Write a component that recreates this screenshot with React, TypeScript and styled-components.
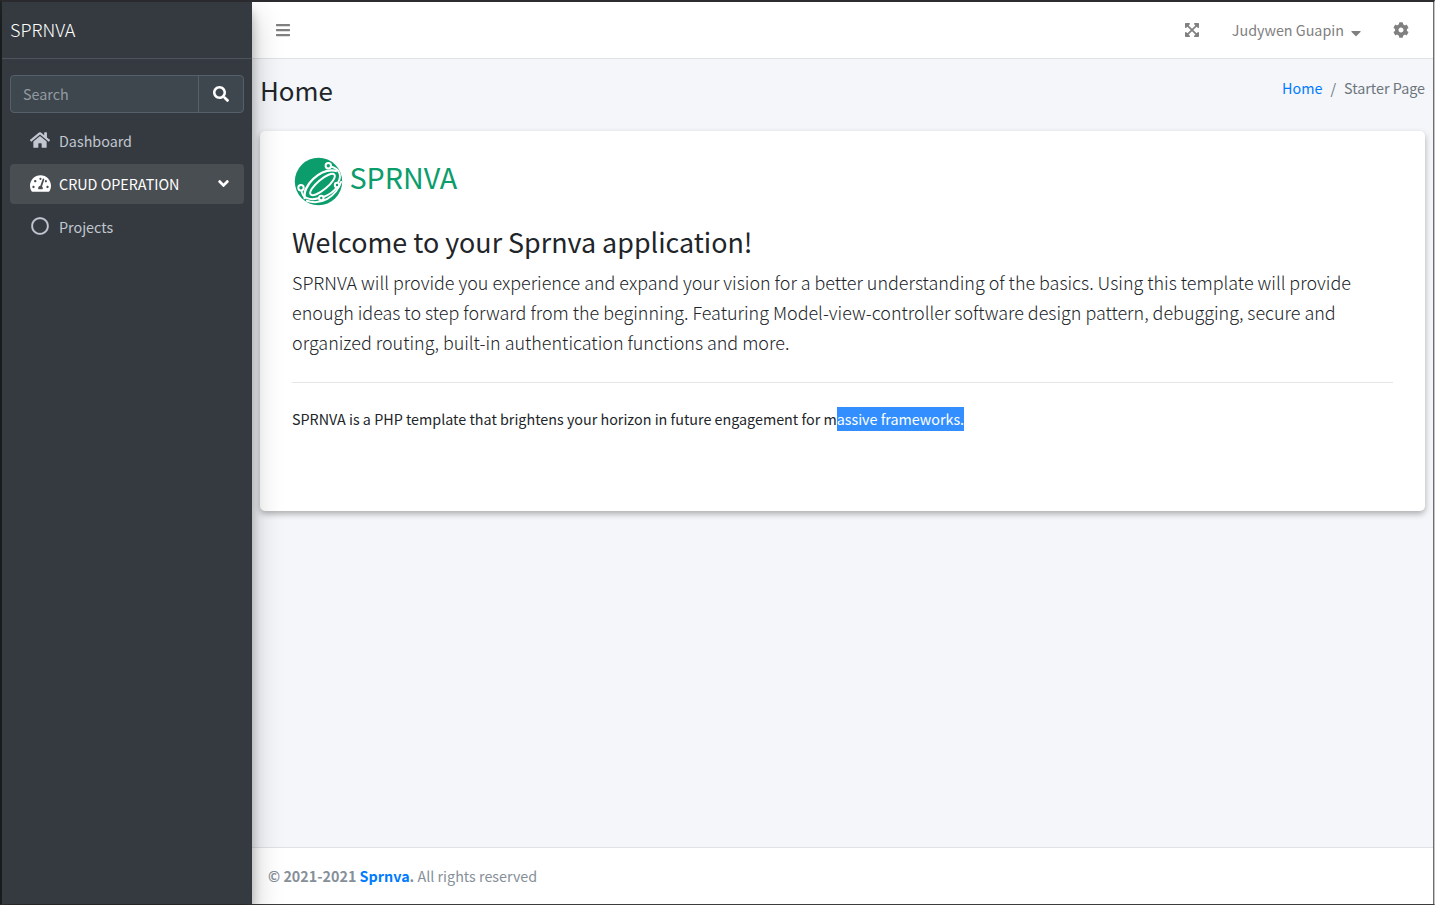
import React from 'react';
import styled, { createGlobalStyle } from 'styled-components';
import { FaBars, FaSearch, FaHome, FaTachometerAlt, FaAngleDown, FaRegCircle, FaExpandArrowsAlt, FaCog, FaCaretDown } from 'react-icons/fa';

const GlobalStyle = createGlobalStyle`
  * { box-sizing: border-box; }
  body {
    margin: 0;
    overflow: hidden;
    font-family: "Noto Sans CJK SC", "Open Sans", sans-serif;
    font-size: 14.34px;
    line-height: 24px;
    color: #212529;
  }
  h1, h2, p { margin: 0; font-weight: 400; }
  a { color: #007bff; text-decoration: none; }
  svg { display: block; flex: none; }
`;

const Window = styled.div`
  display: flex;
  width: 1435px;
  height: 905px;
  border: solid;
  border-width: 2px 1px 1px 2px;
  border-color: #2b2b30 #c4c4c6 #3c3c3f #1f2424;
  background: #f4f6f9;
`;

const Sidebar = styled.aside`
  position: relative;
  z-index: 1;
  width: 250px;
  flex: none;
  background: #343a40;
  color: #c2c7d0;
  box-shadow: 0 14px 28px rgba(0, 0, 0, 0.25), 0 10px 10px rgba(0, 0, 0, 0.22);
`;

const Brand = styled.div`
  height: 57px;
  padding: 12px 8px 0;
  border-bottom: 1px solid #4b545c;
  color: #fff;
  font-size: 18px;
  font-weight: 300;
  line-height: 30px;
`;

const SearchBox = styled.div`
  display: flex;
  height: 38px;
  margin: 16px 8px 8px;
  border: 1px solid #56606a;
  border-radius: 4px;
  background: #3f474e;
`;

const SearchField = styled.div`
  flex: 1;
  padding: 6px 12px;
  color: #939ba2;
`;

const SearchButton = styled.div`
  display: flex;
  align-items: center;
  justify-content: center;
  width: 45px;
  border-left: 1px solid #56606a;
  color: #fff;
`;

const Nav = styled.nav`
  display: flex;
  flex-direction: column;
  gap: 3px;
  padding: 0 8px;
`;

const NavItem = styled.div<{ $active?: boolean }>`
  display: flex;
  align-items: center;
  height: 40px;
  padding: 0 12px 0 17px;
  border-radius: 4px;
  background: ${(p) => (p.$active ? '#494e53' : 'transparent')};
  color: ${(p) => (p.$active ? '#fff' : '#c2c7d0')};
`;

const NavIcon = styled.span`
  display: flex;
  justify-content: center;
  width: 26px;
  margin: 0 6px 2px 0;
`;

const NavLabel = styled.span`
  flex: 1;
`;

const NavArrow = styled.span`
  padding-bottom: 2px;
`;

const Main = styled.div`
  display: flex;
  flex-direction: column;
  flex: 1;
  min-width: 0;
  border-right: 1px solid #6e6e71;
`;

const Topbar = styled.header`
  display: flex;
  align-items: center;
  height: 57px;
  padding: 0 24px 0 23px;
  border-bottom: 1px solid #dee2e6;
  background: #fff;
  color: #808080;
`;

const UserMenu = styled.div`
  display: flex;
  align-items: center;
  gap: 4px;
  margin: 0 29px 0 32px;
`;

const Caret = styled.span`
  padding-top: 5px;
`;

const Spacer = styled.div`
  flex: 1;
`;

const PageHeader = styled.div`
  display: flex;
  justify-content: space-between;
  height: 72px;
  padding: 14px 8px 0;
`;

const PageTitle = styled.h1`
  font-size: 25.9px;
  line-height: 34px;
`;

const Breadcrumb = styled.div`
  display: flex;
  gap: 8px;
  padding-top: 3px;
  color: #6c757d;
`;

const Card = styled.section`
  height: 380px;
  margin: 0 8px;
  padding: 24px 32px;
  border-radius: 5px;
  background: #fff;
  box-shadow: 0 3px 6px rgba(0, 0, 0, 0.3);
`;

const LogoRow = styled.div`
  display: flex;
  gap: 4.5px;
  height: 69px;
  color: #0b9d6c;
  font-size: 28.7px;
  line-height: 44px;
`;

const Welcome = styled.h2`
  font-size: 26.87px;
  line-height: 36px;
`;

const Lead = styled.p`
  margin-top: 7px;
  font-size: 17.93px;
  font-weight: 300;
  line-height: 30px;
  white-space: nowrap;
`;

const Divider = styled.div`
  height: 1px;
  margin: 25px 0 24px;
  background: #e5e5e5;
`;

const Selected = styled.span`
  display: inline-block;
  background: #338fff;
  color: #fff;
`;

const Footer = styled.footer`
  height: 57px;
  margin-top: auto;
  padding: 16px;
  border-top: 1px solid #dee2e6;
  background: #fff;
  color: #869099;
`;

const Logo = () => (
  <svg width="53" height="53" viewBox="0 0 53 53" fill="none" stroke="#fff">
    <circle cx="26.5" cy="26.5" r="23.7" fill="#0b9d6c" stroke="none" />
    <ellipse cx="30.5" cy="29.5" rx="15.5" ry="5" transform="rotate(-40 30.5 29.5)" strokeWidth="2" />
    <path d="M13 44C9 32 28 12 45 16" strokeWidth="2.4" />
    <path d="M39 11.500C48 14 50 21 46 27.500" strokeWidth="1.9" />
    <path d="M9.500 35.500C10 43 18 46 27 43M31.500 42C39 39 43 35 45 32" strokeWidth="1.9" />
    <path d="M14 45.500C29 51 44 42 49.500 26" strokeWidth="1.9" />
    <g fill="#0b9d6c" strokeWidth="2">
      <circle cx="36.3" cy="10.7" r="2.7" />
      <circle cx="9" cy="32.700" r="2.7" />
      <circle cx="29.3" cy="43" r="2.2" />
      <circle cx="45" cy="30" r="2.2" />
    </g>
  </svg>
);

export default function App() {
  return (
    <>
      <GlobalStyle />
      <Window>
        <Sidebar>
          <Brand>SPRNVA</Brand>
          <SearchBox>
            <SearchField>Search</SearchField>
            <SearchButton><FaSearch size={16} /></SearchButton>
          </SearchBox>
          <Nav>
            <NavItem>
              <NavIcon><FaHome size={20} /></NavIcon>
              <NavLabel>Dashboard</NavLabel>
            </NavItem>
            <NavItem $active>
              <NavIcon><FaTachometerAlt size={21} /></NavIcon>
              <NavLabel>CRUD OPERATION</NavLabel>
              <NavArrow><FaAngleDown size={17} /></NavArrow>
            </NavItem>
            <NavItem>
              <NavIcon><FaRegCircle size={18} stroke="currentColor" strokeWidth={8} /></NavIcon>
              <NavLabel>Projects</NavLabel>
            </NavItem>
          </Nav>
        </Sidebar>
        <Main>
          <Topbar>
            <FaBars size={16} />
            <Spacer />
            <FaExpandArrowsAlt size={16} />
            <UserMenu>
              <span>Judywen Guapin</span>
              <Caret><FaCaretDown size={16} /></Caret>
            </UserMenu>
            <FaCog size={16} />
          </Topbar>
          <PageHeader>
            <PageTitle>Home</PageTitle>
            <Breadcrumb>
              <a>Home</a>
              <span>/</span>
              <span>Starter Page</span>
            </Breadcrumb>
          </PageHeader>
          <Card>
            <LogoRow><Logo /><span>SPRNVA</span></LogoRow>
            <Welcome>Welcome to your Sprnva application!</Welcome>
            <Lead>
              SPRNVA will provide you experience and expand your vision for a better understanding of the basics. Using this template will provide<br />
              enough ideas to step forward from the beginning. Featuring Model-view-controller software design pattern, debugging, secure and<br />
              organized routing, built-in authentication functions and more.
            </Lead>
            <Divider />
            <p>SPRNVA is a PHP template that brightens your horizon in future engagement for m<Selected>assive frameworks.</Selected></p>
          </Card>
          <Footer><strong>© 2021-2021 <a>Sprnva</a>.</strong> All rights reserved</Footer>
        </Main>
      </Window>
    </>
  );
}
